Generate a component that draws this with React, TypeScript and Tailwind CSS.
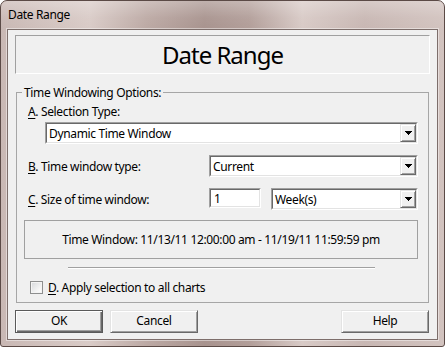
import React from "react";

function Arrow() {
  return (
    <svg width="7" height="4" viewBox="0 0 7 4" shapeRendering="crispEdges">
      <polygon points="0,0 7,0 4,4 3,4" fill="#000" />
    </svg>
  );
}

function DropButton() {
  return (
    <div className="flex h-full w-[16px] items-center justify-center border border-t-[#e3e3e3] border-l-[#e3e3e3] border-r-[#696969] border-b-[#696969] bg-[#f0f0f0] shadow-[inset_1px_1px_0_#ffffff,inset_-1px_-1px_0_#a0a0a0]">
      <Arrow />
    </div>
  );
}

function Combo({ value, className }: { value: string; className: string }) {
  return (
    <div className={"h-[22px] border border-t-[#a0a0a0] border-l-[#a0a0a0] border-r-white border-b-white " + className}>
      <div className="flex h-full border border-t-[#696969] border-l-[#696969] border-r-[#e3e3e3] border-b-[#e3e3e3] bg-white">
        <div className="flex flex-1 items-center pl-[2px]">{value}</div>
        <DropButton />
      </div>
    </div>
  );
}

function Btn({ label, isDefault, className }: { label: string; isDefault?: boolean; className?: string }) {
  return (
    <div
      className={
        "flex h-[23px] w-[88px] items-center justify-center pb-[3px] bg-[#f0f0f0] border " +
        (isDefault
          ? "border-[#5a5a5a] shadow-[inset_1px_1px_0_#ffffff,inset_-1px_-1px_0_#696969,inset_-2px_-2px_0_#a0a0a0] "
          : "border-t-[#e3e3e3] border-l-[#e3e3e3] border-r-[#696969] border-b-[#696969] shadow-[inset_1px_1px_0_#ffffff,inset_-1px_-1px_0_#a0a0a0] ") +
        (className ?? "")
      }
    >
      {label}
    </div>
  );
}

export default function App() {
  return (
    <div className="h-[347px] w-[445px] bg-white font-['Noto_Sans',sans-serif] text-[12px] leading-[15px] tracking-[-0.35px] text-black">
      <div className="flex h-full w-full flex-col rounded-t-[7px] rounded-b-[3px] border border-[#5b4a46] bg-[linear-gradient(90deg,#c9b8b4_0%,#d9cbc7_20%,#bca9a4_33%,#a8938e_46%,#b29e99_56%,#d8cac6_68%,#c8b7b3_82%,#d2c3bf_100%)]">
        <div className="h-[28px] shrink-0 rounded-t-[6px] bg-[linear-gradient(180deg,rgba(255,255,255,0.28)_0%,rgba(255,255,255,0.05)_60%,rgba(255,255,255,0)_100%)] pl-[7px] pt-[6px]">
          Date Range
        </div>
        <div className="mx-[6px] flex h-[311px] flex-col border border-[#7d6e6b] bg-[#f0f0f0] pt-[5px] shadow-[0_0_0_1px_rgba(255,255,255,0.45)]">
          <div className="mx-[7px] flex h-[39px] items-center justify-center border border-t-[#a0a0a0] border-l-[#a0a0a0] border-r-white border-b-white text-[24px] leading-[30px] tracking-[-1px]">
            Date Range
          </div>

          <fieldset className="mx-[8px] mt-[11px] border border-[#a6a6a6] pb-[8px]">
            <legend className="ml-[5px] px-[2px] leading-[15px]">Time Windowing Options:</legend>

            <div className="ml-[11px] mt-[4px]">
              <span className="underline underline-offset-[2px]">A</span>. Selection Type:
            </div>
            <Combo value="Dynamic Time Window" className="ml-[28px] mr-[10px] mt-[3px]" />

            <div className="mr-[10px] ml-[11px] mt-[11px] flex h-[22px] items-center">
              <div className="w-[181px]">
                <span className="underline underline-offset-[2px]">B</span>. Time window type:
              </div>
              <Combo value="Current" className="flex-1" />
            </div>

            <div className="mr-[10px] ml-[11px] mt-[11px] flex h-[22px] items-center">
              <div className="w-[181px]">
                <span className="underline underline-offset-[2px]">C</span>. Size of time window:
              </div>
              <div className="h-[20px] w-[52px] self-start border border-t-[#a0a0a0] border-l-[#a0a0a0] border-r-white border-b-white">
                <div className="flex h-full items-center border border-t-[#696969] border-l-[#696969] border-r-[#e3e3e3] border-b-[#e3e3e3] bg-white pl-[3px]">
                  1
                </div>
              </div>
              <Combo value="Week(s)" className="ml-[10px] flex-1" />
            </div>

            <div className="ml-[7px] mr-[10px] mt-[10px] flex h-[39px] items-center justify-center border border-[#a0a0a0]">
              Time Window: 11/13/11 12:00:00 am - 11/19/11 11:59:59 pm
            </div>

            <div className="ml-[51px] mt-[8px] w-[307px] border-t border-b border-t-[#a0a0a0] border-b-white" />

            <div className="ml-[13px] mt-[12px] flex h-[13px] items-center">
              <div className="h-[13px] w-[13px] border border-[#8e8f8f] bg-[linear-gradient(135deg,#d6d8db_0%,#f6f6f6_70%,#ffffff_100%)] shadow-[inset_0_0_0_1px_#f4f4f4]" />
              <div className="ml-[5px]">
                <span className="underline underline-offset-[2px]">D</span>. Apply selection to all charts
              </div>
            </div>
          </fieldset>

          <div className="mt-[7px] flex pl-[7px] pr-[8px]">
            <Btn label="OK" isDefault />
            <Btn label="Cancel" className="ml-[7px]" />
            <Btn label="Help" className="ml-auto" />
          </div>
        </div>
      </div>
    </div>
  );
}
